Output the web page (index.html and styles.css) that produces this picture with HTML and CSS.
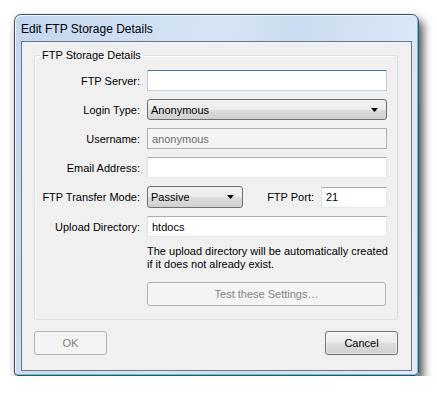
FILE: index.html
```html
<!DOCTYPE html>
<html lang="en">
<head>
    <meta charset="UTF-8">
    <title>Edit FTP Storage Details</title>
    <link rel="stylesheet" href="styles.css">
</head>
<body>
    <div class="window">
        <div class="titlebar">Edit FTP Storage Details</div>
        <div class="client">
            <fieldset class="group">
                <legend>FTP Storage Details</legend>
                <div class="form">
                    <label>FTP Server:</label>
                    <input class="text focused" type="text" value="">

                    <label>Login Type:</label>
                    <div class="combo">
                        <span>Anonymous</span>
                        <svg width="7" height="4" viewBox="0 0 7 4"><path d="M0 0H7L3.5 4Z" fill="#000"/></svg>
                    </div>

                    <label>Username:</label>
                    <input class="text" type="text" value="anonymous" disabled>

                    <label>Email Address:</label>
                    <input class="text" type="text" value="">

                    <label class="tall">FTP Transfer Mode:</label>
                    <div class="split tall">
                        <div class="combo short">
                            <span>Passive</span>
                            <svg width="7" height="4" viewBox="0 0 7 4"><path d="M0 0H7L3.5 4Z" fill="#000"/></svg>
                        </div>
                        <label class="port-label">FTP Port:</label>
                        <input class="text port" type="text" value="21">
                    </div>

                    <label>Upload Directory:</label>
                    <input class="text" type="text" value="htdocs">

                    <p class="note">The upload directory will be automatically created if it does not already exist.</p>

                    <button class="btn test" disabled>Test these Settings…</button>
                </div>
            </fieldset>
            <div class="actions">
                <button class="btn" disabled>OK</button>
                <button class="btn">Cancel</button>
            </div>
        </div>
    </div>
</body>
</html>
```

FILE: styles.css
```css
body {
    margin: 0;
    background: #fff;
    font-family: 'Liberation Sans', Arial, sans-serif;
    font-size: 11px;
    color: #000;
}
.window {
    margin: 14px 0 0 14px;
    padding: 0 6px 4px 6px;
    width: 391px;
    border: 1px solid #3c4e62;
    border-radius: 7px 7px 4px 4px;
    background: linear-gradient(100deg, #c2d7ee 0%, #d6e5f5 45%, #cadcf0 60%, #e1edfa 100%);
    box-shadow: inset -1px -1px 0 #5fc3e4, inset 1px 1px 0 #eef6fd, 4px 6px 10px rgba(0,0,0,0.7);
}
.titlebar {
    height: 26px;
    line-height: 28px;
    font-size: 12px;
    color: #000;
}
.client {
    border: 1px solid #6a7786;
    background: #f0f0f0;
    padding: 7px 13px 15px 12px;
}
.group {
    margin: 0;
    padding: 0 9px 13px 0;
    border: 1px solid #d5dfe5;
    border-radius: 3px;
    box-shadow: inset 1px 1px 0 #fff;
}
.group legend {
    margin-left: 5px;
    padding: 0 2px;
    line-height: 13px;
}
.form {
    display: grid;
    grid-template-columns: 105px 240px;
    column-gap: 7px;
    row-gap: 8px;
    margin-top: 8px;
    align-items: center;
}
.form label {
    text-align: right;
}
.tall {
    height: 22px;
}
.form label.tall {
    line-height: 22px;
}
.text {
    box-sizing: border-box;
    height: 21px;
    margin: 0;
    padding: 0 4px;
    font: inherit;
    color: #000;
    background: #fff;
    border: 1px solid #dbdfe6;
    border-top-color: #abadb3;
    border-right-color: #e3e9ef;
    border-bottom-color: #e3e9ef;
    outline: none;
}
.text.focused {
    border-color: #b5cfe7;
    border-top-color: #3d7bad;
}
.text:disabled {
    background: #f4f4f4;
    color: #6d6d6d;
    border-color: #afafaf;
}
.combo {
    box-sizing: border-box;
    height: 21px;
    display: flex;
    align-items: center;
    justify-content: space-between;
    padding: 0 8px 0 3px;
    border: 1px solid #707070;
    border-radius: 3px;
    background: linear-gradient(#f2f2f2 0%, #ebebeb 50%, #dddddd 51%, #cfcfcf 100%);
}
.split {
    display: flex;
    align-items: center;
}
.combo.short {
    width: 96px;
    height: 22px;
}
.form .port-label {
    flex: 1;
    padding-right: 7px;
}
.text.port {
    width: 66px;
}
.note {
    grid-column: 2;
    margin: 0 -4px 0 0;
    line-height: 13px;
}
.btn {
    box-sizing: border-box;
    height: 24px;
    margin: 0;
    font: inherit;
    color: #000;
    border: 1px solid #707070;
    border-radius: 3px;
    background: linear-gradient(#f2f2f2 0%, #ebebeb 50%, #dddddd 51%, #cfcfcf 100%);
    box-shadow: inset 0 0 0 1px rgba(255,255,255,0.6);
}
.btn:disabled {
    color: #838383;
    border-color: #adb2b5;
    background: #f4f4f4;
    box-shadow: none;
}
.btn.test {
    grid-column: 2;
    width: 239px;
    margin-top: 3px;
}
.actions {
    display: flex;
    justify-content: space-between;
    margin-top: 11px;
}
.actions .btn {
    width: 73px;
}
```
